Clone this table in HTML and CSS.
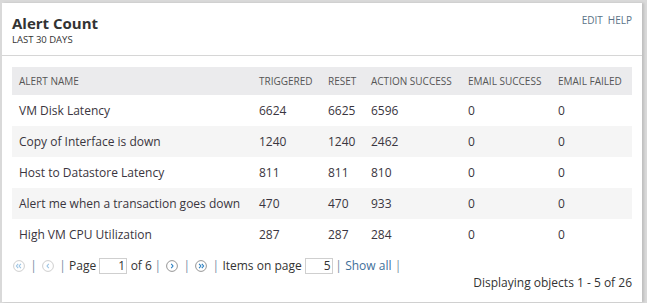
FILE: index.html
```html
<!DOCTYPE html>
<html>
<head>
<meta charset="utf-8">
<link rel="stylesheet" href="styles.css">
</head>
<body>
<div class="panel">
  <div class="header">
    <div class="titles">
      <div class="title">Alert Count</div>
      <div class="subtitle">LAST 30 DAYS</div>
    </div>
    <div class="actions"><span>EDIT</span><span>HELP</span></div>
  </div>
  <div class="content">
    <table class="grid">
      <thead>
        <tr>
          <th class="c1">ALERT NAME</th>
          <th class="c2">TRIGGERED</th>
          <th class="c3">RESET</th>
          <th class="c4">ACTION SUCCESS</th>
          <th class="c5">EMAIL SUCCESS</th>
          <th class="c6">EMAIL FAILED</th>
        </tr>
      </thead>
      <tbody>
        <tr><td>VM Disk Latency</td><td>6624</td><td>6625</td><td>6596</td><td>0</td><td>0</td></tr>
        <tr class="alt"><td>Copy of Interface is down</td><td>1240</td><td>1240</td><td>2462</td><td>0</td><td>0</td></tr>
        <tr><td>Host to Datastore Latency</td><td>811</td><td>811</td><td>810</td><td>0</td><td>0</td></tr>
        <tr class="alt"><td>Alert me when a transaction goes down</td><td>470</td><td>470</td><td>933</td><td>0</td><td>0</td></tr>
        <tr><td>High VM CPU Utilization</td><td>287</td><td>287</td><td>284</td><td>0</td><td>0</td></tr>
      </tbody>
    </table>
    <div class="pager">
      <svg class="ico off" viewBox="0 0 12 12"><circle cx="6" cy="6" r="5.4"/><path d="M5.2 3.8 3.4 6l1.8 2.2M7.9 3.8 6.1 6l1.8 2.2"/></svg>
      <span class="sep">|</span>
      <svg class="ico off" viewBox="0 0 12 12"><circle cx="6" cy="6" r="5.4"/><path d="M6.8 3.8 5 6l1.8 2.2"/></svg>
      <span class="sep">|</span>
      <span class="lbl">Page</span>
      <span class="box">1</span>
      <span class="lbl">of 6</span>
      <span class="sep">|</span>
      <svg class="ico" viewBox="0 0 12 12"><circle cx="6" cy="6" r="5.4"/><path d="M5.2 3.8 7 6l-1.8 2.2"/></svg>
      <span class="sep">|</span>
      <svg class="ico" viewBox="0 0 12 12"><circle cx="6" cy="6" r="5.4"/><path d="M4.1 3.8 5.9 6l-1.8 2.2M6.8 3.8 8.6 6l-1.8 2.2"/></svg>
      <span class="sep">|</span>
      <span class="lbl">Items on page</span>
      <span class="box">5</span>
      <span class="sep">|</span>
      <span class="link">Show all</span>
      <span class="sep">|</span>
    </div>
    <div class="status">Displaying objects 1 - 5 of 26</div>
  </div>
</div>
</body>
</html>
```
FILE: styles.css
```css
html, body {
  margin: 0;
  padding: 0;
}
body {
  background: #d9d9d9;
  padding: 3px 5px 1px 2px;
  font-family: "Open Sans", "Liberation Sans", sans-serif;
  color: #333;
  height: 303px;
  box-sizing: border-box;
}
.panel {
  background: #fff;
  height: 299px;
  box-shadow: 2px 0 2px rgba(0,0,0,0.12);
}
.header {
  display: flex;
  justify-content: space-between;
  height: 52px;
  border-bottom: 1px solid #d6d6d6;
  padding: 0 10px;
  margin-bottom: 1px;
}
.titles {
  padding-top: 10px;
}
.title {
  font-size: 15px;
  font-weight: 700;
  line-height: 20px;
  color: #333;
}
.subtitle {
  font-size: 9.5px;
  line-height: 14px;
  color: #333;
}
.actions {
  padding-top: 10px;
  font-size: 10px;
  line-height: 14px;
  color: #5a7387;
  display: flex;
  gap: 5px;
}
.content {
  padding: 10px 10px 0 10px;
}
.grid {
  width: 100%;
  border-collapse: collapse;
  table-layout: fixed;
}
.grid th {
  background: #ebebed;
  height: 28px;
  font-size: 10px;
  font-weight: 400;
  color: #555;
  text-align: left;
  padding: 0 0 0 7px;
  white-space: nowrap;
}
.c1 { width: 233px; }
.c2 { width: 62px; }
.c3 { width: 36px; }
.c4 { width: 90px; }
.c5 { width: 83px; }
.grid td {
  height: 31px;
  font-size: 12px;
  color: #3a3540;
  padding: 0 0 0 7px;
  white-space: nowrap;
}
.grid tr.alt td {
  background: #f5f5f5;
}
.pager {
  display: flex;
  align-items: center;
  height: 24px;
  margin-top: 3.5px;
  padding-left: 1px;
  font-size: 12px;
  line-height: 16px;
  color: #333;
  white-space: nowrap;
}
.ico {
  width: 12px;
  height: 12px;
  fill: none;
  margin: 0 2px;
  flex: none;
}
.ico:first-child {
  margin-left: 0;
}
.ico circle {
  stroke: #8a8a8a;
  stroke-width: 0.9;
}
.ico path {
  stroke: #2a7fc0;
  stroke-width: 1.1;
}
.ico.off circle { stroke: #c8c8c8; }
.ico.off path { stroke: #9cc4e4; }
.sep {
  display: inline-block;
  width: 7px;
  text-align: center;
  color: #7a8da3;
  margin: 0 3px;
  flex: none;
}
.lbl {
  margin-right: 3px;
}
.lbl + .sep {
  margin-left: -0.5px;
}
.box {
  width: 25px;
  height: 14px;
  border: 1px solid #cfcfcf;
  text-align: right;
  padding-right: 1px;
  line-height: 14px;
  margin-right: 3.5px;
  flex: none;
}
.box + .sep {
  margin-left: -1px;
}
.link {
  color: #3f6f9a;
}
.status {
  text-align: right;
  font-size: 12px;
  color: #333;
  line-height: 14px;
  margin-top: -1.5px;
}
```
